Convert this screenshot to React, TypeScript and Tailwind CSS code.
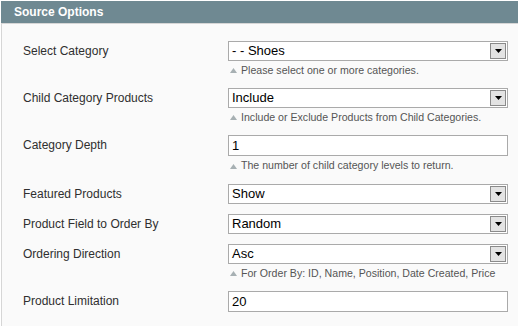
import React from "react"

type Field = {
  label: string
  kind: "select" | "input"
  value: string
  note?: string
}

const fields: Field[] = [
  { label: "Select Category", kind: "select", value: "- - Shoes", note: "Please select one or more categories." },
  { label: "Child Category Products", kind: "select", value: "Include", note: "Include or Exclude Products from Child Categories." },
  { label: "Category Depth", kind: "input", value: "1", note: "The number of child category levels to return." },
  { label: "Featured Products", kind: "select", value: "Show" },
  { label: "Product Field to Order By", kind: "select", value: "Random" },
  { label: "Ordering Direction", kind: "select", value: "Asc", note: "For Order By: ID, Name, Position, Date Created, Price" },
  { label: "Product Limitation", kind: "input", value: "20" },
]

// old-style windows dropdown arrow button
const DropButton = () => (
  <div className="w-[16px] h-[16px] mr-[1px] bg-[#e3e3e3] border border-[#8a8a8a] flex items-center justify-center">
    <svg width="7" height="4" viewBox="0 0 7 4">
      <path d="M0 0h7L3.5 4z" fill="#000" />
    </svg>
  </div>
)

const Control = ({ field }: { field: Field }) => {
  if (field.kind === "input") {
    return (
      <div className="h-[21px] w-[280px] border border-[#aaaaaa] bg-white px-[3px] flex items-center text-[13px] text-black">
        {field.value}
      </div>
    )
  }
  return (
    <div className="h-[20px] w-[280px] border border-[#aaaaaa] bg-white pl-[3px] flex items-center justify-between text-[13px] text-black">
      <span>{field.value}</span>
      <DropButton />
    </div>
  )
}

export default function App() {
  return (
    <div className="w-[518px] h-[326px] overflow-hidden bg-white pt-[1px] pl-[1px] font-['Liberation_Sans',Arial,sans-serif]">
      <div className="h-[22px] bg-[#6f8992] flex items-center pl-[13px]">
        <h4 className="text-white text-[12px] font-bold">Source Options</h4>
      </div>
      <div className="h-[400px] bg-[#fafafa] border-l border-t border-[#d6d6d6] pt-[12px] pl-[21px]">
        {fields.map((f) => (
          <div key={f.label} className="flex py-[5px]">
            <div className="w-[205px] leading-[20px] text-[12px] text-[#2f2f2f]">{f.label}</div>
            <div className="flex flex-col">
              <Control field={f} />
              {f.note && (
                <div
                  className={`${f.kind === "input" ? "h-[18px]" : "h-[17px]"} pt-[2px] flex items-center text-[10.6px] text-[#555]`}
                >
                  <svg width="7" height="5" viewBox="0 0 7 5" className="ml-[2px] mr-[4px]">
                    <path d="M3.5 0L7 5H0z" fill="#a7b0b3" />
                  </svg>
                  {f.note}
                </div>
              )}
            </div>
          </div>
        ))}
      </div>
    </div>
  )
}
